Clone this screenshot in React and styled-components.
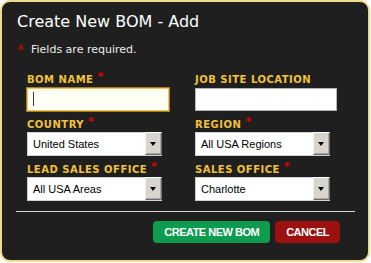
import React from 'react';
import styled, { createGlobalStyle } from 'styled-components';

const GlobalStyle = createGlobalStyle`
  html, body {
    margin: 0;
    padding: 0;
    background: #fff;
  }
`;

const Panel = styled.div`
  box-sizing: border-box;
  width: 370px;
  height: 262px;
  border: 2px solid #f3d98c;
  border-radius: 10px;
  background: #1f1f1f;
  padding: 10px 13px 0 14px;
  display: flex;
  flex-direction: column;
`;

const Title = styled.h1`
  margin: 0 0 0 1px;
  font: normal 16px/19px "DejaVu Sans", Verdana, sans-serif;
  color: #fff;
`;

const Note = styled.p`
  margin: 12px 0 0 0;
  display: flex;
  align-items: flex-start;
  font: 11px/13px "DejaVu Sans", Verdana, sans-serif;
  color: #ececec;
`;

const NoteStar = styled.span`
  font-size: 14px;
  line-height: 13px;
  color: #d40000;
  margin: 0 7px 0 1px;
`;

const Form = styled.div`
  margin-top: 18px;
  padding-left: 11px;
  display: grid;
  grid-template-columns: 168px 1fr;
  row-gap: 8px;
`;

const Field = styled.div`
  display: flex;
  flex-direction: column;
  gap: 1px;
`;

const Label = styled.label`
  font: bold 10px/12px "DejaVu Sans", Verdana, sans-serif;
  letter-spacing: 0.5px;
  color: #f2c23a;
  white-space: nowrap;
`;

const Req = styled.span`
  display: inline-block;
  font-size: 11px;
  line-height: 12px;
  color: #e00000;
  margin-left: 4px;
  position: relative;
  top: -3px;
`;

const InputWrap = styled.div`
  position: relative;
  width: 142px;
  margin-top: 1px;
`;

const TextInput = styled.input`
  box-sizing: border-box;
  display: block;
  width: 142px;
  height: 23px;
  margin: 0;
  padding: 0 6px;
  border: 1px solid ${(p) => (p.$focused ? '#f0c65c' : '#b4b4b4')};
  box-shadow: ${(p) => (p.$focused ? '0 0 0 1px #a97a26' : 'none')};
  background: ${(p) => (p.$focused ? '#fffff4' : '#fff')};
  font: 11px "Liberation Sans", Arial, sans-serif;
  outline: none;
`;

const Caret = styled.span`
  position: absolute;
  left: 6px;
  top: 4px;
  width: 1px;
  height: 14px;
  background: #3a3a3a;
`;

const SelectWrap = styled.div`
  position: relative;
  width: 135px;
  height: 24px;
`;

const Select = styled.select`
  box-sizing: border-box;
  appearance: none;
  -webkit-appearance: none;
  width: 100%;
  height: 100%;
  margin: 0;
  padding: 0 20px 0 5px;
  border: 1px solid #cfcfcf;
  border-radius: 0;
  background: #fff;
  color: #000;
  font: 11px "Liberation Sans", Arial, sans-serif;
  outline: none;
`;

const Arrow = styled.span`
  position: absolute;
  right: 0;
  top: 0;
  bottom: 1px;
  width: 17px;
  box-sizing: border-box;
  background: #d8d5cf;
  border-top: 1px solid #fff;
  border-left: 1px solid #f4f2ee;
  border-right: 1px solid #6e6e6e;
  border-bottom: 1px solid #6e6e6e;
  box-shadow: inset -1px -1px 0 #a9a6a0;
  pointer-events: none;

  &::after {
    content: '';
    position: absolute;
    left: 4px;
    top: 9px;
    border-left: 3.5px solid transparent;
    border-right: 3.5px solid transparent;
    border-top: 4px solid #000;
  }
`;

const Rule = styled.hr`
  margin: 10px 0 0 0;
  border: 0;
  height: 1px;
  background: #d6d6d6;
`;

const Actions = styled.div`
  margin-top: 9px;
  padding-right: 15px;
  display: flex;
  justify-content: flex-end;
  gap: 5px;
`;

const Button = styled.button`
  height: 22px;
  padding: 0 11px;
  border: 0;
  border-radius: 4px;
  background: ${(p) => (p.$variant === 'cancel' ? '#9c1010' : '#0c9b4f')};
  color: #fff;
  font: bold 11px "Liberation Sans", Arial, sans-serif;
  letter-spacing: -0.5px;
  cursor: pointer;
`;

const Dropdown = ({ value, options }) => (
  <SelectWrap>
    <Select defaultValue={value}>
      {options.map((o) => (
        <option key={o}>{o}</option>
      ))}
    </Select>
    <Arrow />
  </SelectWrap>
);

export default function App() {
  return (
    <>
      <GlobalStyle />
      <Panel>
        <Title>Create New BOM - Add</Title>
        <Note>
          <NoteStar>*</NoteStar>
          Fields are required.
        </Note>
        <Form>
          <Field>
            <Label>
              BOM NAME<Req>*</Req>
            </Label>
            <InputWrap>
              <TextInput $focused />
              <Caret />
            </InputWrap>
          </Field>
          <Field>
            <Label>JOB SITE LOCATION</Label>
            <InputWrap>
              <TextInput />
            </InputWrap>
          </Field>
          <Field>
            <Label>
              COUNTRY<Req>*</Req>
            </Label>
            <Dropdown value="United States" options={['United States', 'Canada', 'Mexico']} />
          </Field>
          <Field>
            <Label>
              REGION<Req>*</Req>
            </Label>
            <Dropdown value="All USA Regions" options={['All USA Regions', 'Northeast', 'Southeast']} />
          </Field>
          <Field>
            <Label>
              LEAD SALES OFFICE<Req>*</Req>
            </Label>
            <Dropdown value="All USA Areas" options={['All USA Areas', 'East', 'West']} />
          </Field>
          <Field>
            <Label>
              SALES OFFICE<Req>*</Req>
            </Label>
            <Dropdown value="Charlotte" options={['Charlotte', 'Atlanta', 'Dallas']} />
          </Field>
        </Form>
        <Rule />
        <Actions>
          <Button>CREATE NEW BOM</Button>
          <Button $variant="cancel">CANCEL</Button>
        </Actions>
      </Panel>
    </>
  );
}
